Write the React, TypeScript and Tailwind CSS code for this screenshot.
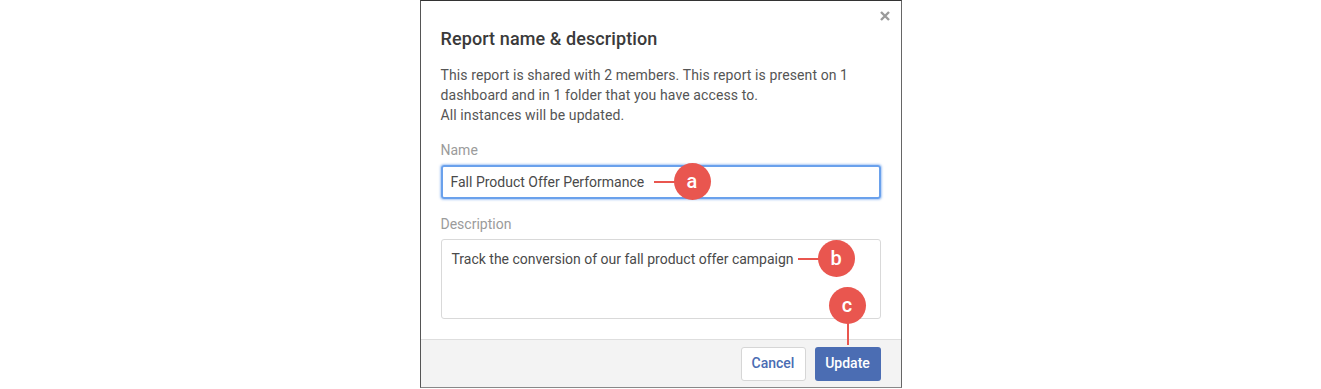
import React from "react";

function Marker({label, className}: {label: string; className: string}) {
  return (
    <div
      className={`absolute flex h-[37px] w-[37px] items-center justify-center rounded-full bg-[#e9564f] text-[20px] font-medium leading-none text-white ${className}`}
    >
      <span className="-mt-[2px]">{label}</span>
    </div>
  );
}

export default function App() {
  return (
    <div className="flex h-[389px] w-[1321px] justify-center bg-white font-['Roboto',sans-serif]">
      <div className="relative flex h-[388px] w-[482px] flex-col border border-t-[#333] border-l-[#555] border-r-[#666] border-b-[#888] bg-white">
        {/* close */}
        <button className="absolute right-[10px] top-[9px] text-[#9a9a9a]">
          <svg width="12" height="12" viewBox="0 0 12 12">
            <path d="M2 2 L10 10 M10 2 L2 10" stroke="currentColor" strokeWidth="2.4" />
          </svg>
        </button>

        <div className="flex flex-1 flex-col px-[20px] pt-[26px]">
          <h2 className="text-[18px] font-medium leading-[24px] tracking-[0.1px] text-[#3a3a3a]">Report name &amp; description</h2>
          <p className="mt-[14px] text-[14px] leading-[20px] tracking-[0.1px] text-[#555]">
            This report is shared with 2 members. This report is present on 1
            <br />
            dashboard and in 1 folder that you have access to.
            <br />
            All instances will be updated.
          </p>

          <label className="mt-[15px] text-[14px] leading-[20px] text-[#9b9b9b]">Name</label>
          <div className="mt-[5px] flex h-[34px] items-center rounded-[3px] border-2 border-[#6aa1ec] px-[8px] text-[14px] text-[#4a4a4a] shadow-[0_0_2px_1px_rgba(90,150,235,0.5)]">
            Fall Product Offer Performance
          </div>

          <label className="mt-[15px] text-[14px] leading-[20px] text-[#9b9b9b]">Description</label>
          <div className="mt-[5px] h-[80px] rounded-[3px] border border-[#d9d9d9] px-[10px] pt-[9px] text-[14px] leading-[20px] text-[#4a4a4a]">
            Track the conversion of our fall product offer campaign
          </div>
        </div>

        <div className="mt-[20px] flex h-[50px] items-center justify-end gap-[9px] border-t border-[#dedede] bg-[#f3f3f3] px-[20px]">
          <button className="h-[34px] w-[65px] rounded-[3px] border border-[#d6d6d6] bg-white text-[14px] font-medium text-[#4a6cb3]">
            Cancel
          </button>
          <button className="h-[34px] w-[66px] rounded-[3px] bg-[#4b6db3] text-[14px] font-medium text-white">
            Update
          </button>
        </div>

        {/* annotations */}
        <div className="absolute left-[233px] top-[180px] h-[2px] w-[22px] bg-[#e9564f]" />
        <Marker label="a" className="left-[253px] top-[162px]" />

        <div className="absolute left-[377px] top-[257px] h-[2px] w-[22px] bg-[#e9564f]" />
        <Marker label="b" className="left-[397px] top-[239px]" />

        <div className="absolute left-[426px] top-[318px] h-[26px] w-[2px] bg-[#e9564f]" />
        <Marker label="c" className="left-[408px] top-[286px]" />
      </div>
    </div>
  );
}
